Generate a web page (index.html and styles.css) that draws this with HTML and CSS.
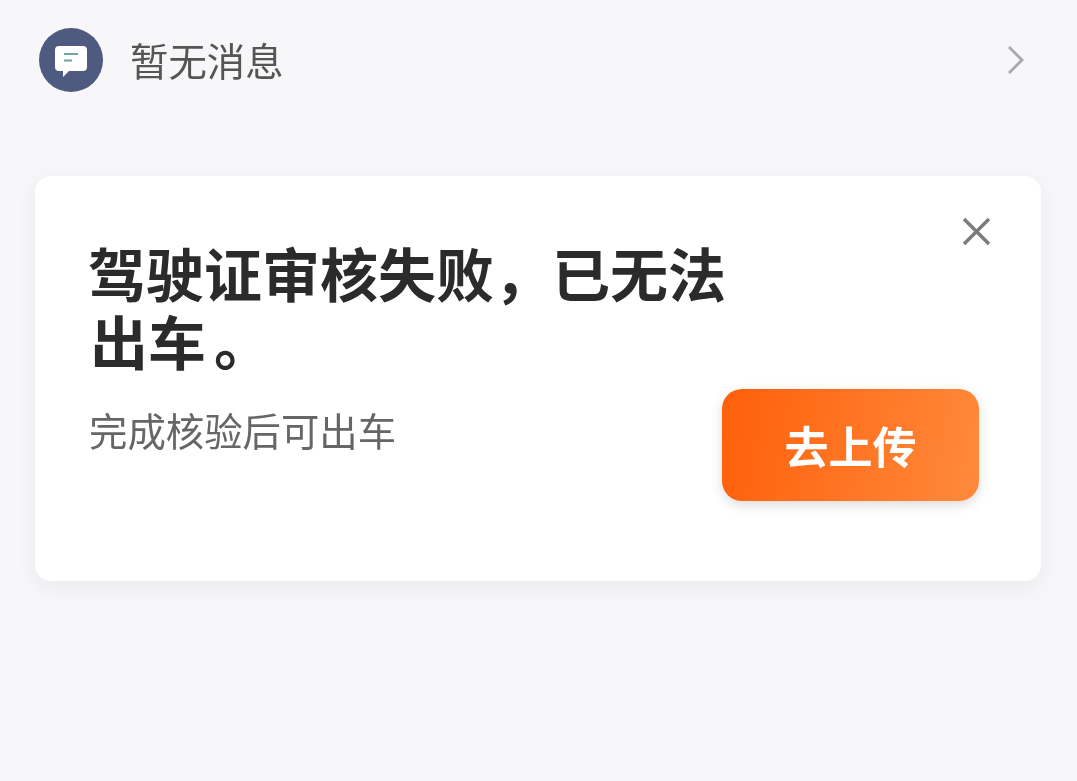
FILE: index.html
```html
<!DOCTYPE html>
<html lang="zh">
<head>
<meta charset="utf-8">
<title>暂无消息</title>
<link rel="stylesheet" href="styles.css">
</head>
<body>
<div class="msg">
  <div class="avatar">
    <svg class="bubble" width="34" height="34" viewBox="0 0 34 34"><path d="M5 1h24a4 4 0 0 1 4 4v17a4 4 0 0 1-4 4H15l-6 6v-6H5a4 4 0 0 1-4-4V5a4 4 0 0 1 4-4z" fill="#fff"/><path d="M10 9h14" stroke="#6fa5a0" stroke-width="2"/><path d="M10 15.500h8" stroke="#6fa5a0" stroke-width="2"/></svg>
  </div>
  <span class="msg-text">暂无消息</span>
  <svg class="chev" width="20" height="32" viewBox="0 0 20 32"><path d="M3 3l13 13L3 29" fill="none" stroke="#a9a9ad" stroke-width="2.800"/></svg>
</div>
<section class="card">
  <svg class="close" width="30" height="30" viewBox="0 0 30 30"><path d="M3 3l25 25M28 3L3 28" stroke="#7b7b7e" stroke-width="3.400"/></svg>
  <h1><span class="line">驾驶证审核失败，已无法</span><span class="line line-second">出车<span class="stop">。</span></span></h1>
  <div class="row">
    <p>完成核验后可出车</p>
    <button class="btn">去上传</button>
  </div>
</section>
</body>
</html>
```
FILE: styles.css
```css
* { box-sizing: border-box; }
html, body { margin: 0; height: 100%; }
body {
  background: #f7f7f9;
  font-family: "Noto Sans CJK SC", "Liberation Sans", sans-serif;
  padding: 28px 35px 0;
  overflow: hidden;
  filter: blur(0.5px);
}
.msg { display: flex; align-items: center; padding: 0 16px 0 4px; height: 64px; }
.avatar {
  width: 64px; height: 64px; border-radius: 50%;
  background: #4f5a80; display: flex; align-items: center; justify-content: center;
}
.bubble { margin-top: 3px; }
.msg-text { margin-left: 27px; padding-bottom: 2px; font-size: 38.400px; line-height: 58px; color: #555; flex: 1; }
.card {
  position: relative;
  margin-top: 84px;
  width: 1006px; height: 405px;
  background: #fff; border-radius: 16px;
  box-shadow: 0 6px 24px rgba(0,0,0,.06);
  padding: 67px 62px 0 53px;
}
.close { position: absolute; top: 40px; right: 50px; }
h1 {
  margin: 0;
  font-family: "Liberation Sans", "Noto Sans CJK SC", sans-serif;
  font-size: 58px; line-height: 68px; font-weight: 700; color: #2b2b2b;
}
.line { display: block; }
.line-second { padding-left: 2px; }
.stop { margin-left: 8px; }
.row { display: flex; align-items: flex-start; justify-content: space-between; margin-top: 10px; }
p { margin: 16px 0 0 1px; font-size: 38.400px; line-height: 48px; color: #666; }
.btn {
  width: 257px; height: 112px; border: 0; border-radius: 20px;
  background: linear-gradient(100deg, #ff5f0a, #ff8a3c);
  color: #fff; font: 700 44px "Noto Sans CJK SC", sans-serif;
  box-shadow: 0 4px 12px rgba(0,0,0,.14);
}
```
